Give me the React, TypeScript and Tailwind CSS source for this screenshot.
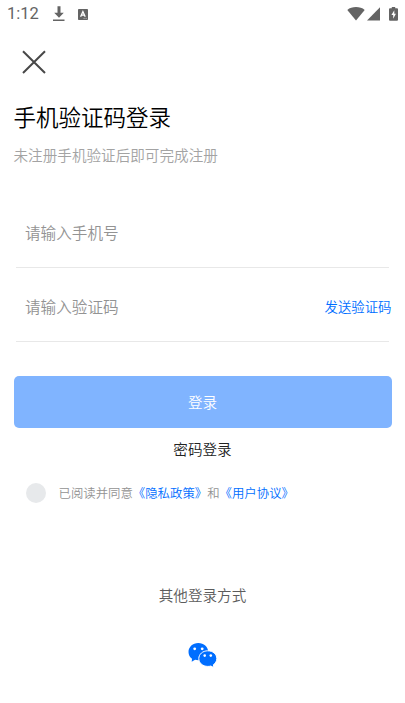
import { useState } from "react";

function StatusBar() {
  return (
    <div className="flex h-7 items-center justify-between pr-[7px] pl-[7px] text-[#646464]">
      <div className="flex items-center">
        <span className="w-[45px] font-[Roboto,sans-serif] text-[16.500px] leading-7 font-normal">1:12</span>
        <svg className="h-4 w-[14px]" viewBox="0 0 14 16" fill="currentColor">
          <path d="M5.500 .3h3v6.500h3.300L7 11.700 2.200 6.800h3.300zM1 13.500h11.500v1.500H1z" />
        </svg>
        <svg className="ml-[12px] h-[11px] w-[10px]" viewBox="0 0 10 11">
          <rect width="10" height="11" rx="0.8" fill="currentColor" />
          <path d="M2.600 7.800 4.900 2.600 7.200 7.800M3.400 6.200h3" fill="none" stroke="#fff" strokeWidth="1.300" />
          <path d="M5.600 9.400h1M7.600 9.400h1" stroke="#fff" strokeWidth="0.600" />
        </svg>
      </div>
      <div className="flex items-center">
        <svg className="h-[14px] w-[18px]" viewBox="0 0 18 14" fill="currentColor">
          <path d="M9 13.500 .3 2.900C2.600.9 5.700 0 9 0s6.400.9 8.700 2.900z" />
        </svg>
        <svg className="ml-[2px] h-[14px] w-[13px]" viewBox="0 0 13 14" fill="currentColor">
          <path d="M13 .3v13.200H0z" />
        </svg>
        <svg className="ml-[9px] h-[14px] w-[9px]" viewBox="0 0 9 14">
          <path d="M2.800 0h3.400v1.300H8q1 0 1 1V12.700q0 1-1 1H1q-1 0-1-1V2.300q0-1 1-1h1.800z" fill="currentColor" />
          <path d="M5.300 3.300 2.400 7.900H4.200v3.800l2.700-5H5.300z" fill="#fff" />
        </svg>
      </div>
    </div>
  );
}

function WechatIcon() {
  return (
    <svg className="h-[26px] w-[29px]" viewBox="0 0 29 26">
      <path
        d="M10.300 1C4.800 1 .5 4.900.5 9.900c0 2.900 1.400 5.300 3.500 6.800l-.3 3 3.400-2c1.100.3 2.100.5 3.200.5 5.500 0 9.800-3.800 9.800-8.600S15.800 1 10.300 1z"
        fill="#006eff"
      />
      <path
        d="M19.800 8.800c-5.100 0-9 3.400-9 7.800s3.900 7.800 9 7.800c1.100 0 2-.1 3-.4l3 1.600-.4-2.900c2.100-1.400 3.400-3.600 3.400-6.100 0-4.400-3.900-7.800-9-7.800z"
        fill="#006eff"
        stroke="#fff"
        strokeWidth="1"
      />
      <g fill="#fff">
        <circle cx="6.700" cy="6.800" r="1.400" />
        <circle cx="14.200" cy="6.800" r="1.400" />
        <circle cx="16.700" cy="13.600" r="1.300" />
        <circle cx="22.800" cy="13.600" r="1.300" />
      </g>
    </svg>
  );
}

export default function App() {
  const [phone, setPhone] = useState("");
  const [code, setCode] = useState("");

  return (
    <div
      lang="zh-CN"
      className="flex h-[703px] w-full flex-col overflow-hidden bg-white font-['Noto_Sans_CJK_SC',sans-serif] font-[350]"
    >
      <StatusBar />

      <button className="mt-[22px] ml-[22px] h-6 w-6" aria-label="关闭">
        <svg viewBox="0 0 24 24" fill="none" stroke="#484848" strokeWidth="2">
          <path d="M1 1.200 23 23M23 1.200 1 23" />
        </svg>
      </button>

      <main className="flex flex-col px-[13.500px]">
        <h1 className="mt-[26px] text-[22.500px] leading-8 font-[350] text-black">手机验证码登录</h1>
        <p className="mt-[13px] text-[14.600px] leading-5 text-[#a3a3a3]">未注册手机验证后即可完成注册</p>

        <div className="mx-[2.500px] mt-[34px] flex h-[69px] items-center border-b border-[#e8e8e8] pb-[2px] pl-[9px]">
          <input
            className="w-full text-[15.600px] leading-6 outline-none placeholder:text-[#939393]"
            placeholder="请输入手机号"
            value={phone}
            onChange={(e) => setPhone(e.target.value)}
          />
        </div>
        <div className="mx-[2.500px] flex h-[74px] items-center border-b border-[#e8e8e8] pt-[3px] pl-[9px]">
          <input
            className="min-w-0 flex-1 text-[15.600px] leading-6 outline-none placeholder:text-[#939393]"
            placeholder="请输入验证码"
            value={code}
            onChange={(e) => setCode(e.target.value)}
          />
          <button className="-mr-[2.500px] shrink-0 text-[13.400px] leading-5 text-[#006eff]">发送验证码</button>
        </div>

        <button className="mt-[34px] h-[52px] rounded-[5px] bg-[#80b4ff] text-[14.600px] text-white">登录</button>
        <button className="mt-[11px] self-center text-[14.600px] leading-5 text-[#222]">密码登录</button>

        <div className="mt-[23px] flex h-5 items-center pl-[12.500px] text-[12.400px] leading-5 text-[#939393]">
          <span className="mt-px mr-[12.500px] h-5 w-5 rounded-full bg-[#e7e9eb]" />
          <span className="pt-[2px]">已阅读并同意</span>
          <a className="pt-[2px] text-[#006eff]">《隐私政策》</a>
          <span className="pt-[2px]">和</span>
          <a className="pt-[2px] text-[#006eff]">《用户协议》</a>
        </div>
      </main>

      <footer className="mt-[83px] flex flex-col items-center">
        <p className="text-[14.600px] leading-5 text-[#5c5c5c]">其他登录方式</p>
        <button className="mt-[37px]" aria-label="微信登录">
          <WechatIcon />
        </button>
      </footer>
    </div>
  );
}
